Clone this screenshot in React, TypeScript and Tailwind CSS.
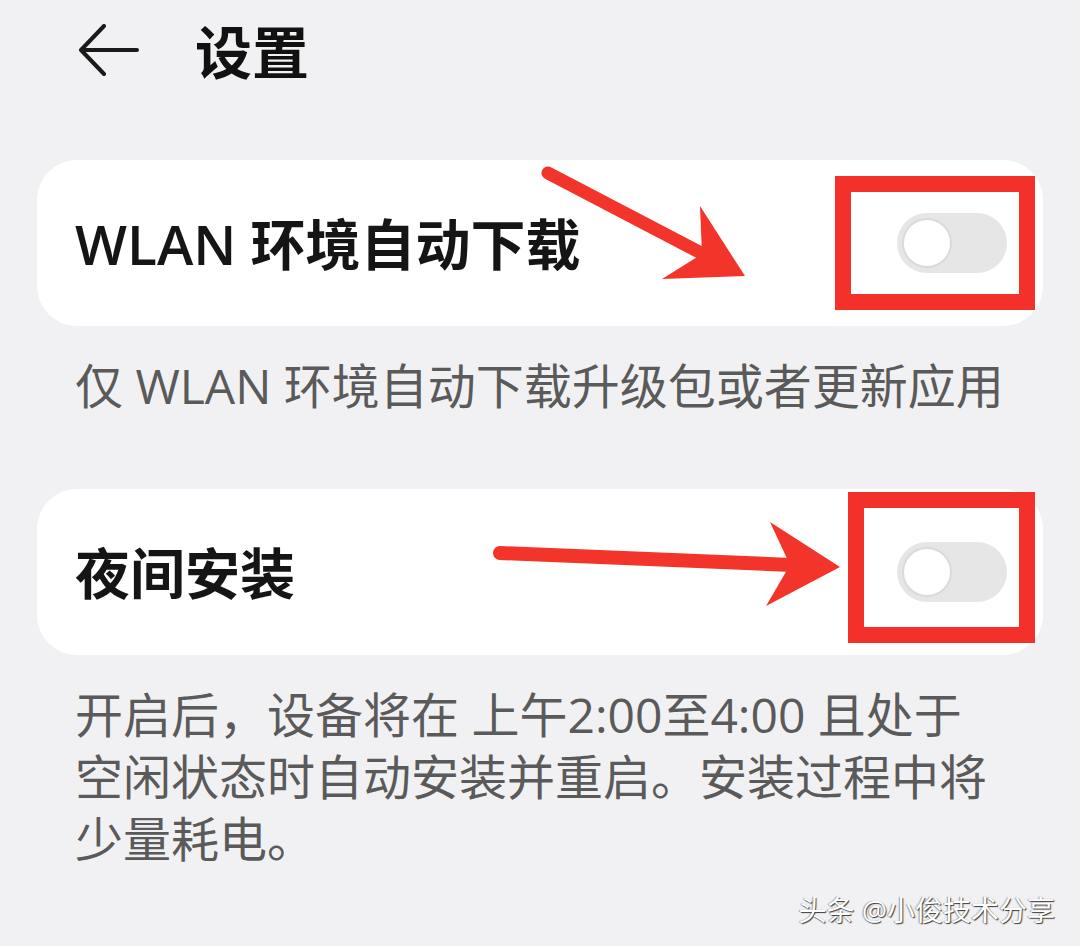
import React from 'react';

const font = { fontFamily: '"Open Sans", "Noto Sans CJK SC", sans-serif' };

const Toggle: React.FC = () => (
  <div className="relative w-[110px] h-[60px] rounded-full bg-[#e6e6e6] shrink-0">
    <div className="absolute left-[5px] top-[5px] w-[50px] h-[50px] rounded-full bg-white border-2 border-[#dadada]" />
  </div>
);

const SettingCard: React.FC<{ title: string; className?: string }> = ({ title, className }) => (
  <div className={`h-[166px] rounded-[40px] bg-white flex items-center justify-between pl-[38px] pr-[36px] ${className ?? ''}`}>
    <span className="text-[55px] font-semibold text-[#151515] leading-none">{title}</span>
    <Toggle />
  </div>
);

export default function App() {
  return (
    <div className="relative w-[1080px] h-[946px] overflow-hidden bg-[#f1f1f3]" style={font}>
      <header className="h-[104px] flex items-center pl-[78px]">
        <svg width="62" height="56" viewBox="0 0 62 56" fill="none">
          <path d="M59 26H3M26 2L3 26l23 24" stroke="#1a1a1a" strokeWidth="4" strokeLinecap="round" strokeLinejoin="round" />
        </svg>
        <h1 className="ml-[55px] text-[57px] font-bold text-[#111] leading-none">设置</h1>
      </header>

      <main className="px-[37px]">
        <SettingCard title="WLAN 环境自动下载" className="mt-[56px]" />
        <p className="mt-[29px] pl-[38px] text-[48px] leading-[62px] text-[#5a5a5a] whitespace-nowrap">
          仅 WLAN 环境自动下载升级包或者更新应用
        </p>

        <SettingCard title="夜间安装" className="mt-[72px]" />
        <p className="mt-[29px] pl-[38px] text-[48px] leading-[62px] text-[#5a5a5a] whitespace-nowrap">
          开启后，设备将在 上午2:00至4:00 且处于
          <br />
          空闲状态时自动安装并重启。安装过程中将
          <br />
          少量耗电。
        </p>
      </main>

      {/* annotations */}
      <div className="absolute left-[835px] top-[176px] w-[200px] h-[134px] border-[16px] border-[#f3302a]" />
      <div className="absolute left-[848px] top-[492px] w-[187px] h-[151px] border-[16px] border-[#f3302a]" />
      <svg className="absolute inset-0 pointer-events-none" width="1080" height="946" viewBox="0 0 1080 946">
        <line x1="548" y1="173" x2="703" y2="254" stroke="#f3342b" strokeWidth="13" strokeLinecap="round" />
        <polygon points="745,276 700,206 702,254 662,279" fill="#f3342b" />
        <line x1="500" y1="553" x2="792" y2="565" stroke="#f3342b" strokeWidth="14" strokeLinecap="round" />
        <polygon points="840,567 770,522 790,565 766,606" fill="#f3342b" />
      </svg>

      <div
        className="absolute right-[25px] bottom-[22px] text-[28px] leading-none text-white"
        style={{ textShadow: '1px 1px 1px rgba(0,0,0,0.75), -1px 0 1px rgba(0,0,0,0.35)' }}
      >
        头条 @小俊技术分享
      </div>
    </div>
  );
}
